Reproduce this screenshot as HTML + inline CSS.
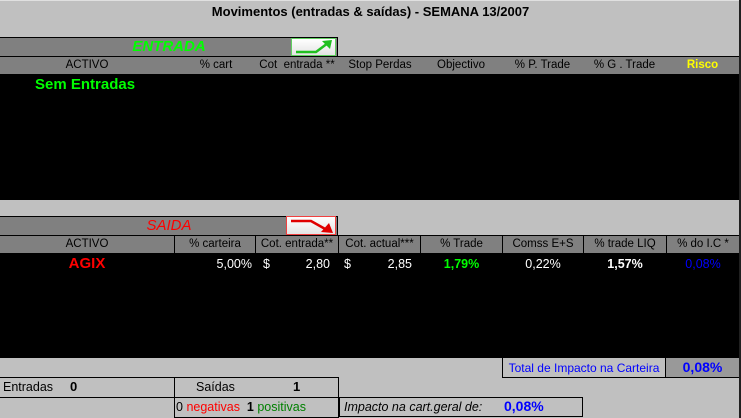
<!DOCTYPE html>
<html><head><meta charset="utf-8"><style>
*{margin:0;padding:0;box-sizing:border-box}
body{width:741px;height:418px;background:#c0c0c0;font-family:"Liberation Sans",Arial,sans-serif;font-size:11.5px;position:relative;overflow:hidden;color:#000}
.a{position:absolute;white-space:nowrap}
.c{text-align:center}
.r{text-align:right}
.b{font-weight:bold}
</style></head><body>
<div class="a" style="left:0;top:0;width:741px;height:1px;background:#e0e0e0"></div>
<div class="a" style="left:739px;top:0;width:2px;height:418px;background:#202020"></div>
<div class="a b c" style="left:0;top:4px;width:741px;font-size:13px;color:#000">Movimentos (entradas &amp; saídas) - SEMANA 13/2007</div>

<div class="a" style="left:0;top:37px;width:338px;height:20px;background:#808080;border-top:1px solid #000;border-right:1px solid #000"></div>
<div class="a c" style="left:0;top:38px;width:338px;font-size:15px;font-style:italic;font-weight:bold;color:#00ff00">ENTRADA</div>
<div class="a" style="left:291px;top:38px;width:45px;height:18px;background:linear-gradient(#fff,#e4e4e4);border:1px solid #60d060">
<svg width="43" height="16" style="position:absolute;left:0;top:0"><path d="M4 13 L24 13 L36 4" stroke="#20c020" stroke-width="2.5" fill="none"/><path d="M30 2 L40 1 L38 10 Z" fill="#20c020"/></svg></div>

<div class="a" style="left:0;top:56px;width:739px;height:18px;background:#808080;border-top:1px solid #000"></div>
<div class="a c" style="left:0;top:59px;width:174px">ACTIVO</div>
<div class="a c" style="left:176px;top:59px;width:80px">% cart</div>
<div class="a c" style="left:254px;top:59px;width:86px">Cot &nbsp;entrada **</div>
<div class="a c" style="left:340px;top:59px;width:80px">Stop Perdas</div>
<div class="a c" style="left:420px;top:59px;width:82px">Objectivo</div>
<div class="a c" style="left:502px;top:59px;width:81px">% P. Trade</div>
<div class="a c" style="left:583px;top:59px;width:83px">% G . Trade</div>
<div class="a c b" style="left:666px;top:59px;width:73px;color:#ffff00">Risco</div>
<div class="a" style="left:0;top:74px;width:739px;height:126px;background:#000"></div>
<div class="a b" style="left:35px;top:76px;font-size:15px;color:#00ff00">Sem Entradas</div>

<div class="a" style="left:0;top:216px;width:338px;height:20px;background:#808080;border-top:1px solid #000;border-right:1px solid #000"></div>
<div class="a c" style="left:0;top:217px;width:338px;font-size:15px;font-style:italic;color:#ff0000">SAIDA</div>
<div class="a" style="left:286px;top:216px;width:50px;height:19px;background:linear-gradient(#fff,#e4e4e4);border:1px solid #f04040">
<svg width="48" height="17" style="position:absolute;left:0;top:0"><path d="M4 4 L24 4 L40 13" stroke="#e00000" stroke-width="2.5" fill="none"/><path d="M34 15 L46 16 L42 6 Z" fill="#e00000"/></svg></div>

<div class="a" style="left:0;top:235px;width:739px;height:18px;background:#808080;border-top:1px solid #000"></div>
<div class="a" style="left:174px;top:236px;width:1px;height:17px;background:#000"></div>
<div class="a" style="left:255px;top:236px;width:1px;height:17px;background:#000"></div>
<div class="a" style="left:338px;top:236px;width:1px;height:17px;background:#000"></div>
<div class="a" style="left:420px;top:236px;width:1px;height:17px;background:#000"></div>
<div class="a" style="left:502px;top:236px;width:1px;height:17px;background:#000"></div>
<div class="a" style="left:583px;top:236px;width:1px;height:17px;background:#000"></div>
<div class="a" style="left:666px;top:236px;width:1px;height:17px;background:#000"></div>
<div class="a c" style="left:0;top:238px;width:174px">ACTIVO</div>
<div class="a c" style="left:175px;top:238px;width:80px">% carteira</div>
<div class="a c" style="left:256px;top:238px;width:82px">Cot. entrada**</div>
<div class="a c" style="left:339px;top:238px;width:81px">Cot. actual***</div>
<div class="a c" style="left:421px;top:238px;width:81px">% Trade</div>
<div class="a c" style="left:503px;top:238px;width:80px">Comss E+S</div>
<div class="a c" style="left:584px;top:238px;width:82px">% trade LIQ</div>
<div class="a c" style="left:667px;top:238px;width:72px">% do I.C *</div>

<div class="a" style="left:0;top:253px;width:739px;height:105px;background:#000"></div>
<div class="a c b" style="left:0;top:255px;width:174px;font-size:15px;color:#ff0000">AGIX</div>
<div class="a r" style="left:180px;top:257px;width:72px;color:#fff;font-size:12.5px">5,00%</div>
<div class="a" style="left:263px;top:257px;color:#fff;font-size:12.5px">$</div>
<div class="a r" style="left:290px;top:257px;width:40px;color:#fff;font-size:12.5px">2,80</div>
<div class="a" style="left:344px;top:257px;color:#fff;font-size:12.5px">$</div>
<div class="a r" style="left:370px;top:257px;width:42px;color:#fff;font-size:12.5px">2,85</div>
<div class="a c b" style="left:421px;top:257px;width:81px;color:#00ff00;font-size:12.5px">1,79%</div>
<div class="a c" style="left:503px;top:257px;width:80px;color:#fff;font-size:12.5px">0,22%</div>
<div class="a c b" style="left:584px;top:257px;width:82px;color:#fff;font-size:12.5px">1,57%</div>
<div class="a c" style="left:667px;top:257px;width:72px;color:#0000ff;font-size:12.5px">0,08%</div>

<div class="a" style="left:502px;top:358px;width:164px;height:20px;border:1px solid #000;border-top:none"></div>
<div class="a c" style="left:502px;top:361px;width:164px;color:#0000ff;font-size:12px">Total de Impacto na Carteira</div>
<div class="a" style="left:666px;top:358px;width:73px;height:20px;background:#999;border-bottom:1px solid #000"></div>
<div class="a c b" style="left:666px;top:359px;width:73px;color:#0000ff;font-size:14px">0,08%</div>

<div class="a" style="left:0;top:377px;width:338px;height:1px;background:#000"></div>
<div class="a" style="left:0;top:397px;width:338px;height:1px;background:#000"></div>
<div class="a" style="left:174px;top:377px;width:1px;height:41px;background:#000"></div>
<div class="a" style="left:338px;top:377px;width:1px;height:41px;background:#000"></div>
<div class="a" style="left:174px;top:417px;width:165px;height:1px;background:#000"></div>
<div class="a" style="left:3px;top:380px;font-size:12.5px">Entradas</div>
<div class="a b" style="left:70px;top:379px;font-size:13px">0</div>
<div class="a" style="left:196px;top:380px;font-size:12.5px">Saídas</div>
<div class="a b" style="left:293px;top:379px;font-size:13px">1</div>
<div class="a" style="left:176px;top:400px;font-size:12.5px">0 <span style="color:#ff0000">negativas</span> &nbsp;<b>1</b> <span style="color:#008000">positivas</span></div>
<div class="a" style="left:339px;top:397px;width:244px;height:20px;border:1px solid #000"></div>
<div class="a" style="left:344px;top:400px;font-style:italic;font-size:12.5px">Impacto na cart.geral de:</div>
<div class="a b" style="left:504px;top:398px;color:#0000ff;font-size:14px">0,08%</div>
</body></html>
